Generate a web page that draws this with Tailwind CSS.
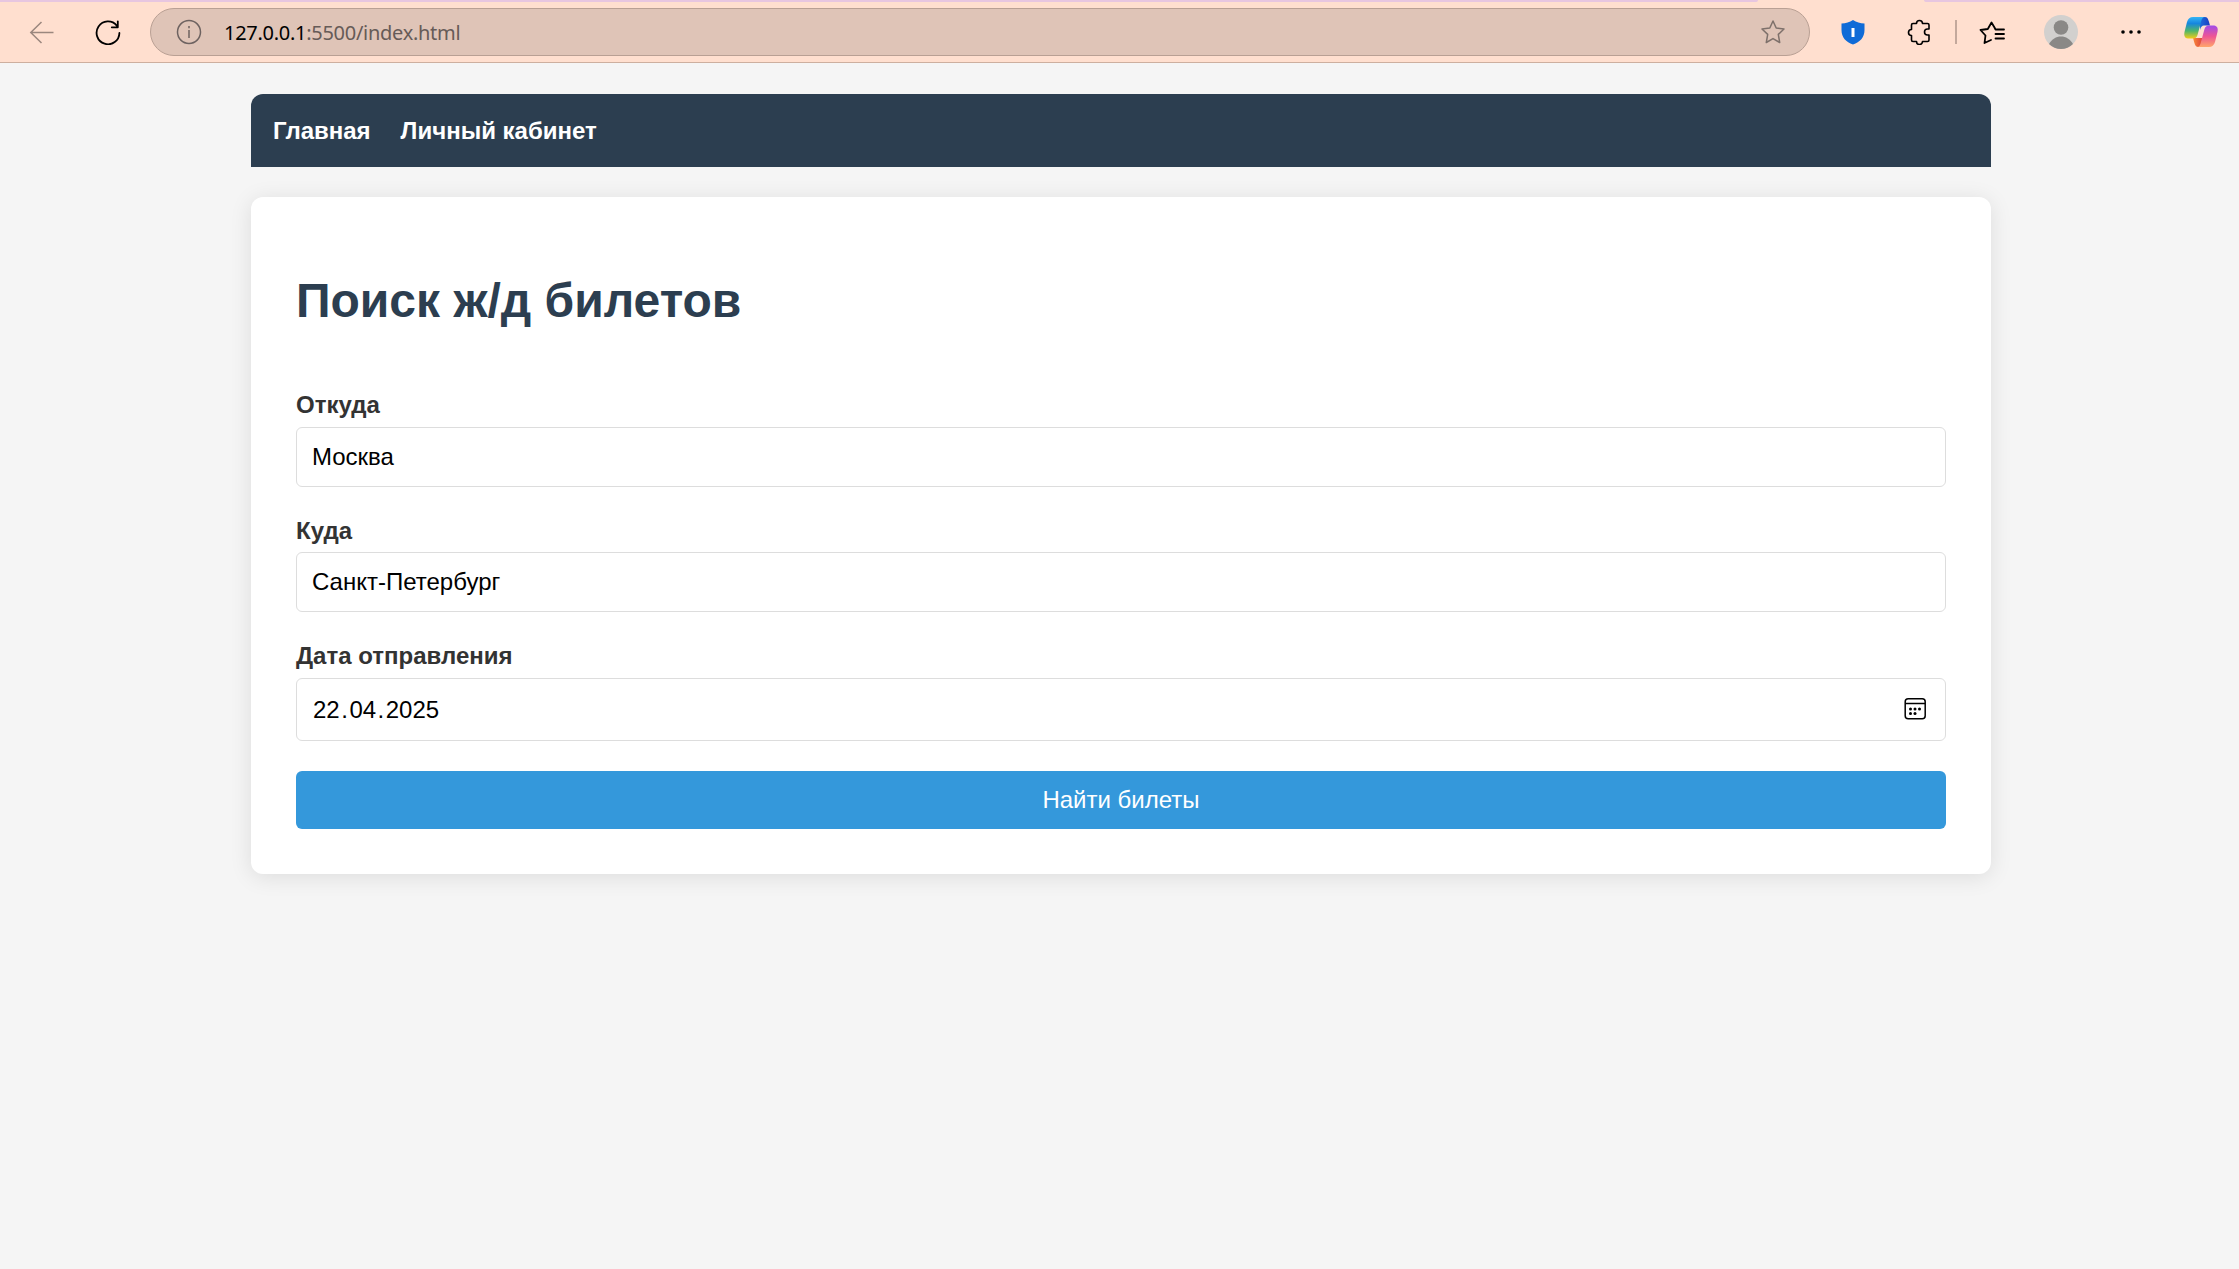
<!DOCTYPE html>
<html lang="ru">
<head>
<meta charset="utf-8">
<title>Поиск ж/д билетов</title>
<script src="https://cdn.jsdelivr.net/npm/@tailwindcss/browser@4"></script>
</head>
<body class="h-[1269px] overflow-hidden bg-[#f5f5f5] font-['Liberation_Sans',sans-serif] text-[24px] text-[#333]">
<header class="flex h-[63px] flex-col border-b border-[#cdaf9f] bg-[#ffdfcf]">
  <div class="flex h-[2px] shrink-0 justify-between">
    <div class="w-[1758px] rounded-br bg-[#e7c6e0]"></div>
    <div class="w-[315px] rounded-bl bg-[#e7c6e0]"></div>
  </div>
  <div class="flex h-[60px] items-center">
    <svg class="mb-[2px] ml-[28px] size-[28px]" viewBox="0 0 28 28" fill="none" stroke="#9b877e" stroke-width="1.5"><path d="M25.500 15.500H2.500M13.500 5L2.800 15.500L13.500 26"/></svg>
    <svg class="mb-[3px] ml-[38px] size-[28px]" viewBox="0 0 28 28" fill="none" stroke="#000" stroke-width="1.8" stroke-linecap="round" stroke-linejoin="round"><path d="M25.400 16A11.400 11.400 0 1 1 22.800 8.600M23.800 4.300V10.300H17.800"/></svg>
    <div class="ml-[28px] flex h-[48px] w-[1660px] items-center rounded-full border border-[#b9a094] bg-[#dfc4b7]">
      <svg class="ml-[25px] size-[26px]" viewBox="0 0 26 26" fill="none" stroke="#6d6260" stroke-width="1.5"><circle cx="13" cy="13" r="11.500"/><path d="M13 11v8M13 7v2.200"/></svg>
      <span class="ml-[22px] w-[240px] whitespace-nowrap pt-px font-['Noto_Sans',sans-serif] text-[20px] leading-[28px] tracking-[-0.28px] text-[#665b57]"><span class="text-black">127.0.0.1</span>:5500/index.html</span>
      <svg class="mr-[23px] ml-auto size-[26px]" viewBox="0 0 26 26" fill="none" stroke="#7e716b" stroke-width="1.500" stroke-linejoin="round"><path d="M13 2L16.200 9L24 10L18.300 15.400L19.700 23.500L13 19.600L6.300 23.500L7.700 15.400L2 10L9.800 9Z"/></svg>
    </div>
    <svg class="ml-[30px] size-[26px]" viewBox="0 0 26 26"><path d="M13 1C16.500 3.300 20 4.200 24.500 4.500V11C24.500 18.500 20 23 13 25.500C6 23 1.500 18.500 1.500 11V4.500C6 4.200 9.500 3.300 13 1Z" fill="#0f6bd7"/><rect x="11.500" y="9" width="3" height="9" fill="#fff"/></svg>
    <svg class="ml-[41px] size-[26px]" viewBox="0 0 26 26" fill="none" stroke="#000" stroke-width="1.600" stroke-linejoin="round"><path d="M6 4.500H9.500A3 3 0 0 1 15.500 4.500H20.500Q22 4.500 22 6V10H20.500A3 3 0 0 0 20.500 16H22V21Q22 22.500 20.500 22.500H15.500A3 3 0 0 1 9.500 22.500H6Q4.500 22.500 4.500 21V16.500A3 3 0 0 1 4.500 10.500V6Q4.500 4.500 6 4.500Z"/></svg>
    <div class="ml-[22px] h-[24px] w-[2px] bg-[#c3a89c]"></div>
    <svg class="ml-[21px] size-[28px]" viewBox="0 0 28 28" fill="none" stroke="#000" stroke-width="1.800" stroke-linecap="round" stroke-linejoin="round"><path d="M26 11.500H17.500L16.500 9.500L13.500 4.500L9.800 11L2.500 12L7.500 17.500L6.500 25L13 22M17.500 16H26M17.500 20.500H26"/></svg>
    <svg class="ml-[38px] size-[34px]" viewBox="0 0 34 34"><circle cx="17" cy="17" r="17" fill="#d2d0ce"/><circle cx="17" cy="12.500" r="7.300" fill="#8a8886"/><path d="M5 29C8 24 12 21.500 17 21.500S26 24 29 29A17 17 0 0 1 5 29Z" fill="#8a8886"/></svg>
    <svg class="ml-[42px] h-[6px] w-[22px]" viewBox="0 0 22 6"><circle cx="3" cy="3" r="1.800"/><circle cx="11" cy="3" r="1.800"/><circle cx="19" cy="3" r="1.800"/></svg>
    <svg class="ml-[42px] h-[32px] w-[34px]" viewBox="0 0 34 32"><defs>
      <linearGradient id="a" x1="0" y1="0" x2="0" y2="1"><stop offset="0" stop-color="#35b5f5"/><stop offset=".3" stop-color="#1686df"/><stop offset=".65" stop-color="#4fb669"/><stop offset="1" stop-color="#f3cc17"/></linearGradient>
      <linearGradient id="b" x1="0" y1="0" x2="0" y2="1"><stop offset="0" stop-color="#a04bea"/><stop offset=".5" stop-color="#ee5594"/><stop offset="1" stop-color="#ffa66a"/></linearGradient>
      <linearGradient id="c"><stop offset="0" stop-color="#1c6ddc"/><stop offset="1" stop-color="#1b3cc0"/></linearGradient>
      <linearGradient id="d"><stop offset="0" stop-color="#f9883b"/><stop offset="1" stop-color="#dc3f3d"/></linearGradient></defs>
      <path d="M16 1H21C24 1 24.500 4 26 9.500H20Q17 9.500 16 14Z" fill="url(#c)"/><path d="M9 22H19L16 31H14C11 31 10.500 27 9 22Z" fill="url(#d)"/>
      <path d="M9 1H21C18 1 17.500 4 16.500 8L13.500 19Q12.500 22.500 9 22.500H5C0 22.500-.5 19 1 14L3 6Q4.500 1 9 1Z" fill="url(#a)"/>
      <path d="M25 9.500H29C34 9.500 34.500 13 33 18L31 26Q29.500 31 25 31H13C16 31 16.500 28 17.500 24L20.500 13Q21.500 9.500 25 9.500Z" fill="url(#b)"/></svg>
  </div>
</header>
<div class="ml-[251px] w-[1740px] pt-[31px]">
  <nav class="flex h-[73px] items-center gap-[30px] rounded-t-[12px] bg-[#2c3e50] px-[22px] font-bold text-white">
    <a>Главная</a><a>Личный кабинет</a>
  </nav>
  <main class="mt-[30px] h-[677px] rounded-[12px] bg-white px-[45px] pt-[76px] shadow-[0_3px_22px_rgba(0,0,0,0.1)]">
    <h1 class="h-[114px] text-[48px] leading-[55px] font-bold text-[#2c3e50]">Поиск ж/д билетов</h1>
    <form class="flex flex-col">
      <label class="h-[40px] pt-[4px] leading-[27px] font-bold">Откуда</label>
      <div class="flex h-[60px] items-center rounded-[6px] border border-[#ddd] px-[15px] text-black">Москва</div>
      <label class="mt-[25px] h-[40px] pt-[5px] leading-[27px] font-bold">Куда</label>
      <div class="flex h-[60px] items-center rounded-[6px] border border-[#ddd] px-[15px] text-black">Санкт-Петербург</div>
      <label class="mt-[26px] h-[40px] pt-[4px] leading-[27px] font-bold">Дата отправления</label>
      <div class="flex h-[63px] items-center justify-between rounded-[6px] border border-[#ddd] pr-[18px] pl-[16px] text-black"><span>22<span class="px-[1.5px]">.</span>04<span class="px-[1.5px]">.</span>2025</span>
        <svg class="mb-px size-[24px]" viewBox="0 0 24 24" fill="none" stroke="#000" stroke-width="1.500"><rect x="2.200" y="1.700" width="20" height="20" rx="3"/><path d="M2.500 6.500H22"/><g fill="#000" stroke="none"><circle cx="7.500" cy="12" r="1.500"/><circle cx="12" cy="12" r="1.500"/><circle cx="16.500" cy="12" r="1.500"/><circle cx="7.500" cy="16.500" r="1.500"/><circle cx="12" cy="16.500" r="1.500"/></g></svg>
      </div>
      <button type="button" class="mt-[30px] h-[58px] rounded-[6px] bg-[#3498db] text-white">Найти билеты</button>
    </form>
  </main>
</div>
</body>
</html>
